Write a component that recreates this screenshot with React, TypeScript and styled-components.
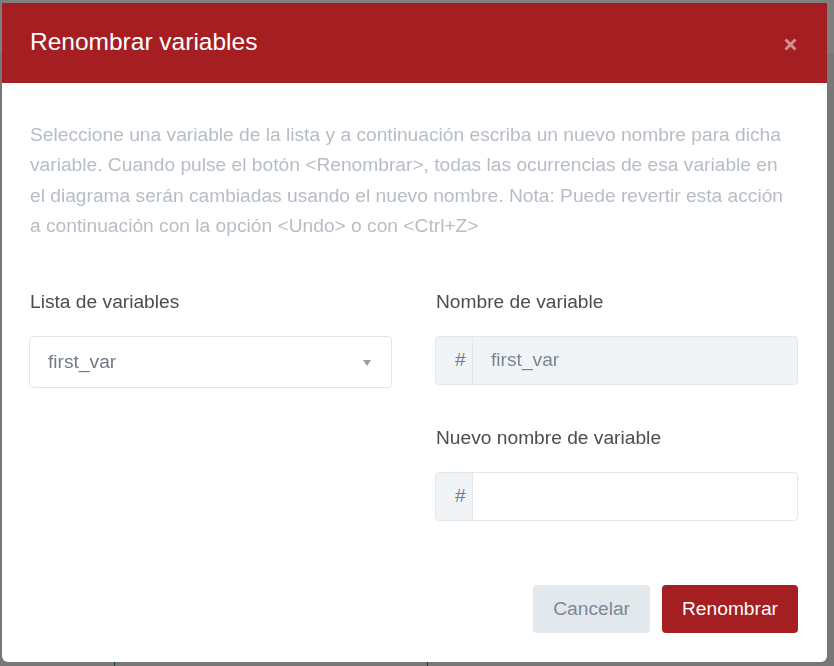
import styled, { createGlobalStyle } from 'styled-components'

const GlobalStyle = createGlobalStyle`
  html, body {
    margin: 0;
    padding: 0;
    height: 100%;
  }
  body {
    background: #eeeeee;
    font-family: "Liberation Sans", Arial, sans-serif;
    overflow: hidden;
  }
`

const description =
  'Seleccione una variable de la lista y a continuación escriba un nuevo nombre para dicha variable. Cuando pulse el botón <Renombrar>, todas las ocurrencias de esa variable en el diagrama serán cambiadas usando el nuevo nombre. Nota: Puede revertir esta acción a continuación con la opción <Undo> o con <Ctrl+Z>'

function App() {
  return (
    <>
      <GlobalStyle />
      <AppShell>
        <TopBar />
        <Workspace>
          <Pane />
          <Pane />
          <Pane />
        </Workspace>
      </AppShell>

      <Overlay>
        <Modal>
          <Header>
            <Title>Renombrar variables</Title>
            <CloseButton aria-label="Cerrar">
              <svg width="13" height="13" viewBox="0 0 13 13">
                <path d="M1.5 1.5 L11.5 11.5 M11.5 1.5 L1.5 11.5" stroke="currentColor" strokeWidth="3" strokeLinecap="butt" />
              </svg>
            </CloseButton>
          </Header>

          <Body>
            <Description>{description}</Description>

            <Columns>
              <Column>
                <Label>Lista de variables</Label>
                <Select>
                  <span>first_var</span>
                  <Caret />
                </Select>
              </Column>

              <Column>
                <Label>Nombre de variable</Label>
                <InputGroup disabled>
                  <Prefix>#</Prefix>
                  <Input value="first_var" disabled readOnly />
                </InputGroup>

                <Label spaced>Nuevo nombre de variable</Label>
                <InputGroup>
                  <Prefix>#</Prefix>
                  <Input defaultValue="" />
                </InputGroup>
              </Column>
            </Columns>
          </Body>

          <Footer>
            <Button variant="secondary">Cancelar</Button>
            <Button variant="primary">Renombrar</Button>
          </Footer>
        </Modal>
      </Overlay>
    </>
  )
}

const AppShell = styled.div`
  display: flex;
  flex-direction: column;
  height: 100vh;
`

const TopBar = styled.div`
  height: 53px;
  background: #ffffff;
`

const Workspace = styled.div`
  flex: 1;
  display: grid;
  grid-template-columns: 115px 313px 1fr;
`

const Pane = styled.div`
  border-right: 1px solid #3d7663;
  &:last-child {
    border-right: none;
  }
`

const Overlay = styled.div`
  position: fixed;
  inset: 0;
  background: rgba(0, 0, 0, 0.5);
  padding: 3px 0 0 2px;
`

const Modal = styled.div`
  width: 825px;
  height: 659px;
  background: #ffffff;
  border-radius: 0 0 6px 6px;
  display: flex;
  flex-direction: column;
  overflow: hidden;
`

const Header = styled.div`
  height: 80px;
  background: #a51e21;
  display: flex;
  align-items: center;
  justify-content: space-between;
  padding: 0 30px 0 28px;
  box-sizing: border-box;
`

const Title = styled.h2`
  margin: 0;
  font-size: 24.5px;
  font-weight: normal;
  color: #ffffff;
  line-height: 1;
  padding-bottom: 1px;
`

const CloseButton = styled.button`
  background: none;
  border: none;
  padding: 0;
  margin-top: 2px;
  color: #d68f91;
  display: flex;
  cursor: pointer;
`

const Body = styled.div`
  padding: 37px 29px 0 27px;
  flex: 1;
`

const Description = styled.p`
  margin: 0 0 0 1px;
  max-width: 760px;
  font-size: 19.2px;
  line-height: 30.4px;
  color: #b6bdc5;
`

const Columns = styled.div`
  display: grid;
  grid-template-columns: 1fr 1fr;
  column-gap: 43px;
  margin-top: 48px;
`

const Column = styled.div`
  display: flex;
  flex-direction: column;
`

const Label = styled.label<{ spaced?: boolean }>`
  display: block;
  font-size: 19.2px;
  line-height: 24px;
  color: #4d4d4d;
  margin: ${({ spaced }) => (spaced ? '41px' : '0')} 0 22px 1px;
`

const Select = styled.div`
  height: 52px;
  box-sizing: border-box;
  border: 1px solid #e3e6e9;
  border-radius: 4px;
  display: flex;
  align-items: center;
  justify-content: space-between;
  padding: 0 20px 0 18px;
  font-size: 19.2px;
  color: #6f7b87;
`

const Caret = styled.span`
  width: 0;
  height: 0;
  border-left: 4.5px solid transparent;
  border-right: 4.5px solid transparent;
  border-top: 6px solid #9a9fa5;
  margin-top: 2px;
`

const InputGroup = styled.div<{ disabled?: boolean }>`
  height: 49px;
  box-sizing: border-box;
  border: 1px solid #e4e7ea;
  border-radius: 4px;
  display: flex;
  overflow: hidden;
  background: ${({ disabled }) => (disabled ? '#f1f4f7' : '#ffffff')};
`

const Prefix = styled.span`
  width: 37px;
  box-sizing: border-box;
  padding: 0 6px 0 19px;
  border-right: 1px solid #e4e7ea;
  background: #f1f4f7;
  display: flex;
  align-items: center;
  font-size: 19.2px;
  color: #6c7a8a;
`

const Input = styled.input`
  flex: 1;
  min-width: 0;
  border: none;
  outline: none;
  background: transparent;
  padding: 0 18px;
  font-family: inherit;
  font-size: 19.2px;
  color: #7a8591;
  &:disabled {
    color: #7a8591;
    -webkit-text-fill-color: #7a8591;
  }
`

const Footer = styled.div`
  display: flex;
  justify-content: flex-end;
  gap: 12px;
  padding: 0 29px 29px 0;
`

const Button = styled.button<{ variant: 'primary' | 'secondary' }>`
  height: 48px;
  padding: 0 20px;
  border: none;
  border-radius: 4px;
  font-family: inherit;
  font-size: 19.2px;
  cursor: pointer;
  background: ${({ variant }) => (variant === 'primary' ? '#a51e21' : '#e3e8ec')};
  color: ${({ variant }) => (variant === 'primary' ? '#ffffff' : '#7d8a96')};
`

export default App
